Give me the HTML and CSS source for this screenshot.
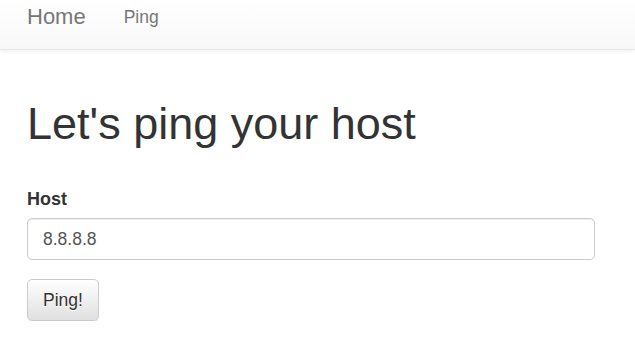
FILE: index.html
```html
<!DOCTYPE html>
<html>
<head>
<meta charset="utf-8">
<link rel="stylesheet" href="styles.css">
</head>
<body>
<nav class="navbar">
  <a class="brand" href="#">Home</a>
  <a class="nav-link" href="#">Ping</a>
</nav>
<main class="main">
  <h1 class="title">Let's ping your host</h1>
  <form class="form">
    <label class="label" for="host">Host</label>
    <input class="input" id="host" type="text" value="8.8.8.8">
    <button class="btn" type="button">Ping!</button>
  </form>
</main>
</body>
</html>
```

FILE: styles.css
```css
html, body {
  margin: 0;
  padding: 0;
  background: #fff;
  font-family: "Liberation Sans", Arial, sans-serif;
  color: #333;
}
.navbar {
  height: 50px;
  box-sizing: border-box;
  display: flex;
  align-items: baseline;
  padding: 5px 0 0 27px;
  background: linear-gradient(to bottom, #ffffff 0%, #f8f8f8 100%);
  border-bottom: 1px solid #e7e7e7;
  box-shadow: inset 0 1px 0 rgba(255,255,255,.15), 0 1px 5px rgba(0,0,0,.075);
}
.brand {
  font-size: 22px;
  line-height: 24px;
  color: #777;
  text-decoration: none;
}
.nav-link {
  margin-left: 38px;
  font-size: 17.5px;
  line-height: 24px;
  color: #777;
  text-decoration: none;
  position: relative;
  top: -1px;
}
.main {
  padding: 0 27px;
}
.title {
  margin: 47px 0 0;
  font-size: 45px;
  line-height: 54px;
  font-weight: 400;
  color: #333;
}
.form {
  display: flex;
  flex-direction: column;
  align-items: flex-start;
  margin-top: 36px;
}
.label {
  font-size: 18px;
  line-height: 24px;
  font-weight: 700;
  color: #333;
}
.input {
  margin-top: 7px;
  width: 568px;
  height: 42px;
  box-sizing: border-box;
  padding: 0 15px;
  font-family: "Liberation Sans", Arial, sans-serif;
  font-size: 17.5px;
  color: #555;
  background: #fff;
  border: 1px solid #ccc;
  border-radius: 5px;
  box-shadow: inset 0 1px 1px rgba(0,0,0,.075);
  outline: none;
}
.btn {
  margin-top: 19px;
  height: 42px;
  box-sizing: border-box;
  padding: 0 15px;
  font-family: "Liberation Sans", Arial, sans-serif;
  font-size: 17.5px;
  color: #333;
  background: linear-gradient(to bottom, #ffffff 0%, #e0e0e0 100%);
  border: 1px solid #ccc;
  border-radius: 5px;
  text-shadow: 0 1px 0 #fff;
  box-shadow: inset 0 1px 0 rgba(255,255,255,.15), 0 1px 1px rgba(0,0,0,.075);
}
```
